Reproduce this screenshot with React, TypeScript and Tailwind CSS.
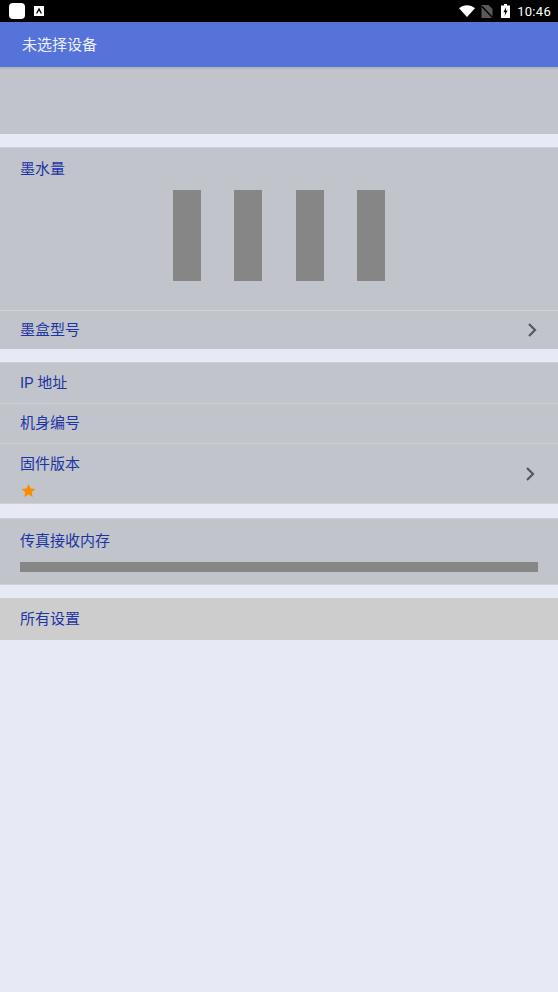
import React from 'react';

const font = '[font-family:Roboto,"Noto_Sans_CJK_SC",sans-serif]';

const Chevron = () => (
  <svg viewBox="0 0 10 16" className="w-[10px] h-[16px] shrink-0" fill="none" stroke="#55585f" strokeWidth="2.2">
    <path d="M2 2 L8 8 L2 14" />
  </svg>
);

const Row = ({ label, className = '', children }: { label: string; className?: string; children?: React.ReactNode }) => (
  <div className={`flex items-center justify-between pl-[20px] text-[15px] text-[#1c35a3] ${className}`}>
    <span>{label}</span>
    {children}
  </div>
);

export default function App() {
  return (
    <div className={`${font} w-[558px] h-[992px] bg-[#e7e9f5] flex flex-col overflow-hidden`}>
      <div className="h-[22px] bg-black flex items-center justify-between pl-[9px] pr-[7px] shrink-0">
        <div className="flex items-center gap-[9px]">
          <div className="w-[16px] h-[16px] bg-white rounded-[4px]" />
          <div className="w-[10px] h-[10px] bg-white flex items-center justify-center">
            <svg viewBox="0 0 10 10" className="w-[10px] h-[10px]">
              <path d="M5 1.5 L8 7.5 H6.6 L5 4.4 L3.4 7.5 H2 Z" fill="#000" />
            </svg>
          </div>
        </div>
        <div className="flex items-center">
          <svg viewBox="0 0 16 12" className="w-[16px] h-[12px] mr-[6px]">
            <path d="M0 3.2 C4.5 -0.8 11.5 -0.8 16 3.2 L8 12 Z" fill="#fff" />
          </svg>
          <svg viewBox="0 0 11 13" className="w-[12px] h-[13px] mr-[8px]">
            <path d="M0 0 H7 L11 4 V13 H0 Z" fill="#5a5a5a" />
            <path d="M0 1 L11 12.5" stroke="#000" strokeWidth="1.4" />
          </svg>
          <svg viewBox="0 0 9 14" className="w-[9px] h-[14px] mr-[7px]">
            <path d="M3 0 H6 V1.5 H9 V14 H0 V1.5 H3 Z" fill="#fff" />
            <path d="M5.2 3 L2.4 8.2 H4.2 L3.6 12 L6.6 6.6 H4.8 Z" fill="#000" />
          </svg>
          <span className="text-white text-[13px] leading-none tracking-[0.3px]">10:46</span>
        </div>
      </div>

      <div className="h-[45px] bg-[#5573d9] flex items-center pl-[22px] pt-[1px] text-[15px] text-[#eef1fb] shrink-0">未选择设备</div>

      <div className="h-[67px] bg-[#c1c4cb] border-t-[2px] border-[#b4b6bc] shrink-0" />

      <div className="mt-[13px] bg-[#c1c4cb] border-t border-[#cfd0d4] shrink-0">
        <div className="h-[163px] border-b border-[#cfd1d4] flex flex-col">
          <div className="pl-[20px] pt-[11px] text-[15px] leading-[20px] text-[#1c35a3]">墨水量</div>
          <div className="flex gap-[33.3px] mt-[11px] pl-[173px]">
            <div className="w-[28px] h-[91px] bg-[#868686]" />
            <div className="w-[28px] h-[91px] bg-[#868686]" />
            <div className="w-[28px] h-[91px] bg-[#868686]" />
            <div className="w-[28px] h-[91px] bg-[#868686]" />
          </div>
        </div>
        <Row label="墨盒型号" className="h-[38px] pr-[21px]">
          <Chevron />
        </Row>
      </div>

      <div className="mt-[13px] bg-[#c1c4cb] border-t border-b border-[#cfd0d4] shrink-0">
        <Row label="IP 地址" className="h-[41px] pt-[1px] border-b border-[#cfd1d4]" />
        <Row label="机身编号" className="h-[40px] border-b border-[#cfd1d4]" />
        <div className="h-[59px] flex items-center justify-between pl-[20px] pr-[23px]">
          <div className="flex flex-col pt-[5px]">
            <span className="text-[15px] leading-[20px] text-[#1c35a3]">固件版本</span>
            <svg viewBox="0 0 24 24" className="w-[15px] h-[15px] ml-[1px] mt-[9px]" fill="#fb8c00">
              <path d="M12 1.5 L15.2 8.6 L23 9.4 L17.2 14.6 L18.8 22.4 L12 18.4 L5.2 22.4 L6.8 14.6 L1 9.4 L8.8 8.6 Z" />
            </svg>
          </div>
          <Chevron />
        </div>
      </div>

      <div className="mt-[14px] bg-[#c1c4cb] border-t border-b border-[#cfd0d4] h-[67px] px-[20px] shrink-0">
        <div className="pt-[12px] text-[15px] leading-[20px] text-[#1c35a3]">传真接收内存</div>
        <div className="mt-[11px] h-[10px] bg-[#868686]" />
      </div>

      <div className="mt-[13px] h-[42px] bg-[#cdcdcd] flex items-center pl-[20px] text-[15px] text-[#1c35a3] shrink-0">所有设置</div>
    </div>
  );
}
